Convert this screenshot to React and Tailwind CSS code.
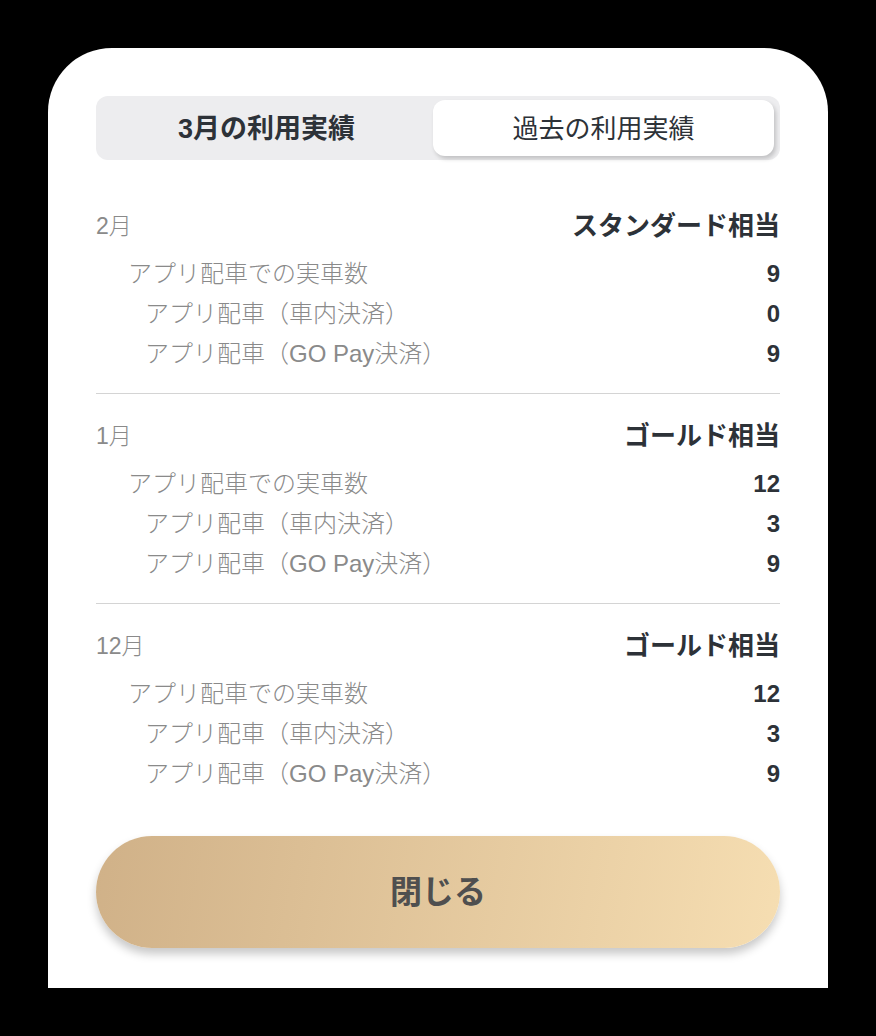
import React from "react";

const months = [
  { month: "2月", rank: "スタンダード相当", total: 9, inCar: 0, goPay: 9 },
  { month: "1月", rank: "ゴールド相当", total: 12, inCar: 3, goPay: 9 },
  { month: "12月", rank: "ゴールド相当", total: 12, inCar: 3, goPay: 9 },
];

function Row({ label, value, indent }) {
  return (
    <div className="h-10 flex items-center justify-between">
      <span className={`text-[24px] text-[#8a8a8a] font-light ${indent}`}>{label}</span>
      <span className="text-[24px] font-bold text-[#2d3238]">{value}</span>
    </div>
  );
}

function MonthSection({ data, last }) {
  return (
    <div className={`pt-[26px] pb-[19px] ${last ? "" : "border-b border-[#d4d4d4]"}`}>
      <div className="h-8 flex items-center justify-between">
        <span className="text-[23px] text-[#8a8a8a] font-light">{data.month}</span>
        <span className="text-[26px] font-bold text-[#2d3238]">{data.rank}</span>
      </div>
      <div className="mt-[12px]">
        <Row label="アプリ配車での実車数" value={data.total} indent="pl-8" />
        <Row label="アプリ配車（車内決済）" value={data.inCar} indent="pl-[49px]" />
        <Row label="アプリ配車（GO Pay決済）" value={data.goPay} indent="pl-[49px]" />
      </div>
    </div>
  );
}

export default function App() {
  return (
    <div
      className="min-h-[1036px] bg-black px-12 pt-12"
      style={{ fontFamily: '"Liberation Sans", "Noto Sans CJK JP", sans-serif' }}
    >
      <div className="bg-white rounded-t-[64px] px-12 pt-12 pb-10">
        <div className="h-16 bg-[#ededef] rounded-xl p-1 pr-[6px] flex">
          <div className="flex-1 flex items-center justify-center pt-[2px] text-[27px] font-bold text-[#2d3238]">
            3月の利用実績
          </div>
          <div className="w-[341px] bg-white rounded-xl flex items-center justify-center pt-[2px] text-[26px] text-[#2d3238] shadow-[2px_3px_4px_rgba(0,0,0,0.18)]">
            過去の利用実績
          </div>
        </div>
        <div className="mt-6">
          {months.map((m, i) => (
            <MonthSection key={m.month} data={m} last={i === months.length - 1} />
          ))}
        </div>
        <button className="mt-[23px] w-full h-[112px] rounded-full bg-linear-100 from-[#d0b188] to-[#f6deb2] text-[32px] font-bold text-[#4f4f4f] shadow-[0_6px_10px_rgba(0,0,0,0.22)]">
          閉じる
        </button>
      </div>
    </div>
  );
}
